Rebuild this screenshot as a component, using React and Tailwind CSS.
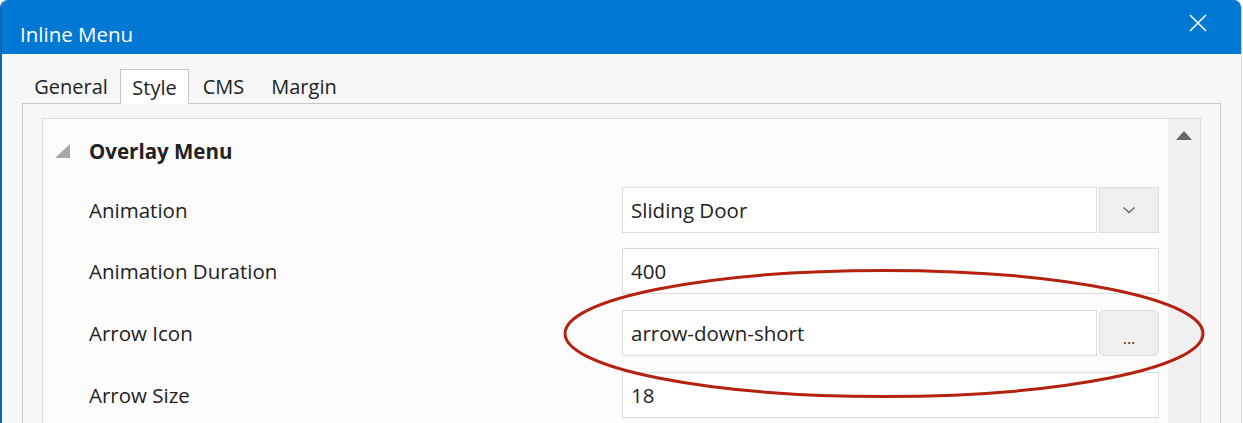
import React from "react";

const font = { fontFamily: '"Open Sans", "Noto Sans", sans-serif' };

function Row({ label, children, className = "" }) {
  return (
    <div className={`flex h-[46px] items-center ${className}`}>
      <div className="w-[579px] pl-[46px] text-[20.5px] text-[#222]">{label}</div>
      <div className="flex h-full w-[537px]">{children}</div>
    </div>
  );
}

function TextBox({ value, className = "" }) {
  return (
    <div className={`flex h-full items-center border border-[#dcdcdc] bg-white pl-[8px] text-[20.5px] text-[#222] ${className}`}>
      {value}
    </div>
  );
}

export default function App() {
  return (
    <div className="relative h-[423px] w-[1243px] overflow-hidden bg-white" style={font}>
      <div className="flex h-[423px] w-[1242px] flex-col overflow-hidden rounded-t-[8px] border-l-2 border-r border-l-[#0a66b8] border-r-[#d4d4d4] bg-[#f7f7f7]">
        {/* title bar */}
        <div className="flex h-[54px] shrink-0 items-start justify-between bg-[#0078d4] pl-[18px] pr-[34px]">
          <span className="pt-[22px] text-[20.5px] leading-[24px] text-white">Inline Menu</span>
          <svg width="18" height="18" viewBox="0 0 18 18" className="mt-[14px]">
            <path d="M1 1 L17 17 M17 1 L1 17" stroke="white" strokeWidth="1.6" />
          </svg>
        </div>
        {/* tabs */}
        <div className="flex h-[49px] shrink-0 items-end pl-[20px]">
          <div className="flex h-[34px] w-[98px] items-center justify-center pt-[2px] text-[20px] text-[#222]">General</div>
          <div className="relative z-10 -mb-px flex h-[35px] w-[69px] items-center justify-center border border-b-0 border-[#c8c8c8] bg-white pt-[1px] text-[20px] text-[#222]">Style</div>
          <div className="flex h-[34px] w-[69px] items-center justify-center pt-[2px] text-[20px] text-[#222]">CMS</div>
          <div className="flex h-[34px] w-[92px] items-center justify-center pt-[2px] text-[20px] text-[#222]">Margin</div>
        </div>
        {/* tab panel */}
        <div className="ml-[20px] flex w-[1199px] flex-1 flex-col border border-b-0 border-[#c8c8c8] bg-[#f7f7f7] px-[19px] pt-[14px]">
          <div className="flex flex-1 border border-b-0 border-[#dcdcdc] bg-[#fcfcfc]">
            <div className="flex flex-1 flex-col">
              <div className="flex h-[64px] items-center">
                <svg width="15" height="14" viewBox="0 0 15 14" className="ml-[12px]">
                  <path d="M15 0 L15 14 L0 14 Z" fill="#a8a8a8" />
                </svg>
                <span className="ml-[19px] text-[20.5px] font-bold text-[#222]">Overlay Menu</span>
              </div>
              <div className="flex flex-col pt-[4px]">
                <Row label="Animation">
                  <TextBox value="Sliding Door" className="flex-1" />
                  <div className="ml-[2px] flex h-full w-[60px] items-center justify-center border border-[#dcdcdc] bg-[#efefef]">
                    <svg width="14" height="8" viewBox="0 0 14 8">
                      <path d="M1.5 1.5 L7 6.5 L12.5 1.5" fill="none" stroke="#6a6a6a" strokeWidth="1.6" />
                    </svg>
                  </div>
                </Row>
                <Row label="Animation Duration" className="mt-[15px]">
                  <TextBox value="400" className="flex-1" />
                </Row>
                <Row label="Arrow Icon" className="mt-[16px]">
                  <TextBox value="arrow-down-short" className="flex-1" />
                  <div className="ml-[2px] flex h-full w-[60px] items-end justify-center rounded-[5px] border border-[#dcdcdc] bg-[#efefef] pb-[9px] text-[16px] leading-none text-[#333]">
                    ...
                  </div>
                </Row>
                <Row label="Arrow Size" className="mt-[16px]">
                  <TextBox value="18" className="flex-1" />
                </Row>
              </div>
            </div>
            <div className="w-[32px] shrink-0 bg-[#f0f0f0] pt-[12px]">
              <svg width="16" height="9" viewBox="0 0 16 9" className="ml-[8px]">
                <path d="M8 0 L16 9 L0 9 Z" fill="#666" />
              </svg>
            </div>
          </div>
        </div>
      </div>
      {/* annotation ellipse */}
      <svg className="pointer-events-none absolute left-0 top-0" width="1243" height="423">
        <ellipse cx="884" cy="333.5" rx="319" ry="63" fill="none" stroke="#b5210f" strokeWidth="3" />
      </svg>
    </div>
  );
}
